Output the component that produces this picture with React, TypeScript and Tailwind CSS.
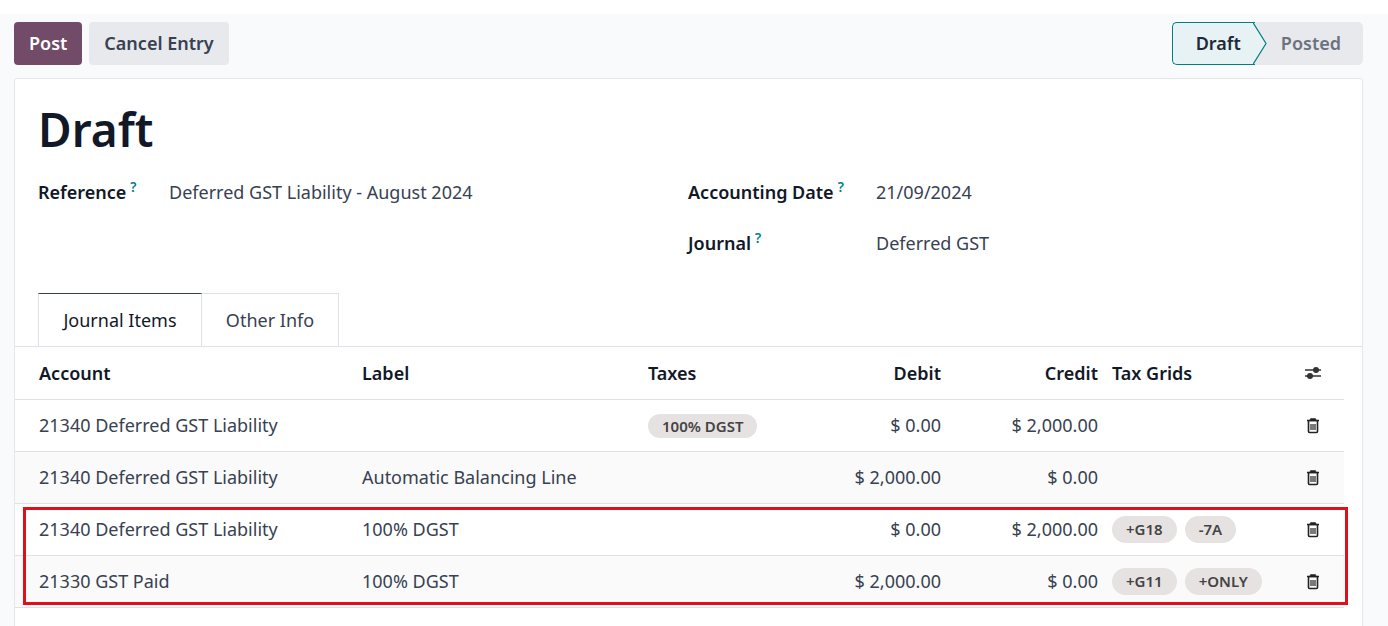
const cols = 'grid grid-cols-[24px_323px_286px_153px_140px_157px_14px_189px_23px_20px] items-center';

interface Row {
  account: string;
  label: string;
  tax?: string;
  debit: string;
  credit: string;
  grids: string[];
  shaded?: boolean;
}

const rows: Row[] = [
  { account: '21340 Deferred GST Liability', label: '', tax: '100% DGST', debit: '$ 0.00', credit: '$ 2,000.00', grids: [] },
  { account: '21340 Deferred GST Liability', label: 'Automatic Balancing Line', debit: '$ 2,000.00', credit: '$ 0.00', grids: [], shaded: true },
  { account: '21340 Deferred GST Liability', label: '100% DGST', debit: '$ 0.00', credit: '$ 2,000.00', grids: ['+G18', '-7A'] },
  { account: '21330 GST Paid', label: '100% DGST', debit: '$ 2,000.00', credit: '$ 0.00', grids: ['+G11', '+ONLY'], shaded: true },
];

function Bin() {
  return (
    <svg width="16" height="17" viewBox="0 0 16 17" fill="none" stroke="#222" strokeWidth="1.6">
      <path d="M2 3.5h12M6 3.5V2h4v1.5" />
      <rect x="3.5" y="3.5" width="9" height="12" rx="1" />
      <path d="M6 7v6M8 7v6M10 7v6" strokeWidth="1.2" />
    </svg>
  );
}

function Pill({ text }: { text: string }) {
  return (
    <span className="rounded-full bg-[#e7e2e2] px-[14px] py-[2px] text-[15px] font-semibold text-[#444]">{text}</span>
  );
}

function TableRow({ r }: { r: Row }) {
  return (
    <div className={`${cols} h-[52px] border-b border-[#dee2e6] text-[18px] text-[#374151] ${r.shaded ? 'bg-[#fafafa]' : 'bg-white'}`}>
      <div />
      <div>{r.account}</div>
      <div>{r.label}</div>
      <div>{r.tax && <Pill text={r.tax} />}</div>
      <div className="text-right">{r.debit}</div>
      <div className="text-right">{r.credit}</div>
      <div />
      <div className="flex gap-2">
        {r.grids.map((g) => (
          <Pill key={g} text={g} />
        ))}
      </div>
      <div className="flex justify-center"><Bin /></div>
      <div />
    </div>
  );
}

export default function App() {
  return (
    <div className="h-[626px] overflow-hidden bg-white font-['Noto_Sans',sans-serif]">
      <div className="mt-[14px] bg-[#f9fafb] pl-[14px] pr-[25px] pt-[8px]">
        <div className="flex items-center justify-between">
          <div className="flex gap-[7px]">
            <button className="h-[43px] rounded-[4px] bg-[#714b67] px-[15px] text-[18px] font-semibold text-white">Post</button>
            <button className="h-[43px] rounded-[4px] bg-[#e7e9ed] px-[15px] text-[18px] font-semibold text-[#374151]">Cancel Entry</button>
          </div>
          <div className="flex h-[43px] items-stretch">
            <div className="relative flex items-center rounded-l-[5px] border border-r-0 border-[#017e84] bg-[#e6f2f3] pl-[23px] pr-[14px] text-[18px] font-semibold text-[#1f2937]">
              Draft
              <svg className="absolute -right-[12px] top-[-1px]" width="14" height="43" viewBox="0 0 14 43">
                <path d="M0 0.5 L13 21.5 L0 42.5 Z" fill="#e6f2f3" />
                <path d="M0 0.5 L13 21.5 L0 42.5" fill="none" stroke="#017e84" strokeWidth="1.2" />
              </svg>
            </div>
            <div className="flex items-center rounded-r-[5px] bg-[#e7e9ed] pl-[26px] pr-[22px] text-[18px] font-semibold text-[#6b7280]">Posted</div>
          </div>
        </div>
        <div className="mt-[13px] h-[600px] rounded-t-[3px] border border-[#e5e7eb] bg-white">
          <h1 className="ml-[23px] mt-[22px] text-[46px] font-semibold leading-[56px] text-[#111827]">Draft</h1>
          <div className="mt-[22px] grid grid-cols-[673px_1fr] text-[18px]">
            <div className="flex pl-[23px]">
              <span className="w-[131px] font-semibold text-[#111827]">Reference<sup className="ml-1 text-[#017e84]">?</sup></span>
              <span className="text-[#374151]">Deferred GST Liability - August 2024</span>
            </div>
            <div className="flex flex-col gap-[24px]">
              <div className="flex">
                <span className="w-[188px] font-semibold text-[#111827]">Accounting Date<sup className="ml-1 text-[#017e84]">?</sup></span>
                <span className="text-[#374151]">21/09/2024</span>
              </div>
              <div className="flex">
                <span className="w-[188px] font-semibold text-[#111827]">Journal<sup className="ml-1 text-[#017e84]">?</sup></span>
                <span className="text-[#374151]">Deferred GST</span>
              </div>
            </div>
          </div>
          <div className="mt-[36px] flex border-b border-[#dee2e6] pl-[23px] text-[18px]">
            <div className="-mb-px flex h-[53px] w-[164px] items-center justify-center border border-b-0 border-[#dee2e6] border-t-[#374151] bg-white text-[#111827]">Journal Items</div>
            <div className="flex h-[53px] w-[137px] items-center justify-center border border-b-0 border-l-0 border-[#dee2e6] text-[#374151]">Other Info</div>
          </div>
          <div className="w-[1329px]">
            <div className={`${cols} h-[53px] border-b border-[#dee2e6] text-[18px] font-semibold text-[#111827]`}>
              <div />
              <div>Account</div>
              <div>Label</div>
              <div>Taxes</div>
              <div className="text-right">Debit</div>
              <div className="text-right">Credit</div>
              <div />
              <div>Tax Grids</div>
              <div className="flex justify-center">
                <svg width="18" height="16" viewBox="0 0 18 16" stroke="#333" strokeWidth="1.6" fill="#333">
                  <path d="M1 5h16M1 11h16" />
                  <circle cx="12" cy="5" r="2.2" />
                  <circle cx="6" cy="11" r="2.2" />
                </svg>
              </div>
              <div />
            </div>
            <TableRow r={rows[0]} />
            <TableRow r={rows[1]} />
            <div className="relative">
              <TableRow r={rows[2]} />
              <TableRow r={rows[3]} />
              <div className="pointer-events-none absolute left-[8px] right-[-4px] top-[3px] bottom-[3px] border-[3px] border-[#e0101a]" />
            </div>
            <div className="pl-[23px] pt-[14px] text-[18px] text-[#017e84]">Add a line</div>
          </div>
        </div>
      </div>
    </div>
  );
}
